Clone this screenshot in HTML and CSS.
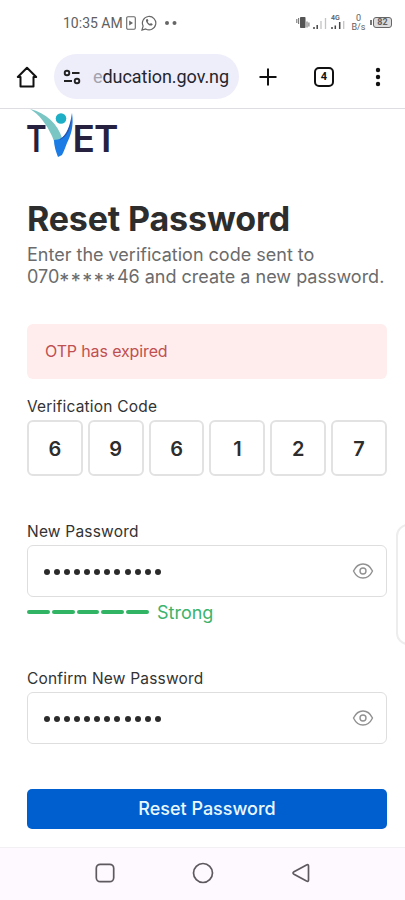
FILE: index.html
```html
<!DOCTYPE html>
<html lang="en">
<head>
<meta charset="utf-8">
<meta name="viewport" content="width=device-width, initial-scale=1">
<title>Reset Password</title>
<link rel="stylesheet" href="styles.css">
</head>
<body>
<div class="phone">
  <header class="status">
    <div class="status-left">
      <span class="clock">10:35 AM</span>
      <svg class="status-doc" width="10" height="14" viewBox="0 0 10 14"><rect x=".7" y=".7" width="8.6" height="12.6" rx="1.2" fill="none" stroke="#666" stroke-width="1.1"/><path d="M3.2 4.6v4.8L7 7z" fill="#666"/></svg>
      <svg class="status-chat" width="16" height="16" viewBox="0 0 16 16"><path d="M1 15l1.1-3.9A6.7 6.7 0 1 1 4.7 13.9z" fill="none" stroke="#666" stroke-width="1.2"/><path d="M5.4 4.2c-1.8 2 2.5 7.400 5.400 6.200 1-.5.9-1.300.7-1.500L9.900 8l-.9.9C8 8.600 7 7.500 6.700 6.700l.7-.9-.8-1.700z" fill="#666"/></svg>
      <svg class="status-dots" width="14" height="6" viewBox="0 0 14 6"><circle cx="3" cy="3" r="2" fill="#666"/><circle cx="10.500" cy="3" r="2" fill="#666"/></svg>
    </div>
    <div class="status-right">
      <svg width="14" height="14" viewBox="0 0 14 14"><rect x="4" y="1" width="5.500" height="11" rx=".8" fill="#555"/><path d="M.8 3v4M2.600 2v6M11 5.500v6M12.900 6.500v4" stroke="#777" stroke-width="1.100"/></svg>
      <svg class="signal-one" width="14" height="14" viewBox="0 0 14 14"><path d="M1 11v2M4.200 9v4" stroke="#444" stroke-width="1.500"/><path d="M8 5v8M12.500 2v11" stroke="#c4c4c4" stroke-width="1.300"/></svg>
      <span class="network"><span class="network-type">4G</span><svg width="14" height="9" viewBox="0 0 14 9"><path d="M1 6v2M4.300 4.500V8M8.700 1v7" stroke="#444" stroke-width="1.500"/><path d="M12.700 0v8" stroke="#c4c4c4" stroke-width="1.300"/></svg></span>
      <span class="speed"><span>0</span><span>B/s</span></span>
      <span class="battery"><span class="battery-cell">82</span></span>
    </div>
  </header>

  <nav class="toolbar">
    <svg class="home" width="22" height="22" viewBox="0 0 22 22"><path d="M4.500 11H1.800L11 1.700 20.200 11h-2.700v9.400h-13z" fill="none" stroke="#111" stroke-width="2" stroke-linejoin="round"/></svg>
    <div class="address">
      <svg width="18" height="16" viewBox="0 0 18 16"><g fill="none" stroke="#222" stroke-width="1.900"><circle cx="4" cy="4" r="2.300"/><path d="M9 4h7.500M1 12h8"/><circle cx="14" cy="12" r="2.300"/></g></svg>
      <span class="url"><span class="url-fade">e</span>ducation.gov.ng</span>
    </div>
    <svg class="plus" width="18" height="18" viewBox="0 0 18 18"><path d="M9 .5v17M.5 9h17" stroke="#111" stroke-width="2"/></svg>
    <span class="tabs">4</span>
    <svg class="menu" width="6" height="20" viewBox="0 0 6 20"><g fill="#111"><circle cx="3" cy="3" r="2.200"/><circle cx="3" cy="10" r="2.200"/><circle cx="3" cy="17" r="2.200"/></g></svg>
  </nav>

  <main class="page">
    <svg class="logo" width="96" height="60" viewBox="0 0 96 60" role="img" aria-label="TVET">
      <g class="logo-text"><text x="-1" y="43" textLength="20" lengthAdjust="spacingAndGlyphs">T</text><text x="45.500" y="43">ET</text></g>
      <path d="M3 0C19 4 31 15 35 29l-4 18C29 40 28 34 25 27 20 16 12 5 3 0z" fill="#79c6c5"/>
      <path d="M45 4c2 13-1 22-5 30-2 5-3 8-5 12l-4 2c-2-5-4-11-4-17 11 0 17-11 18-27z" fill="#1b7ce6"/>
      <path d="M45 4C43 17 40 26 32 31c8-2 13-12 13-27z" fill="#2a55b0"/>
      <circle cx="34" cy="9.500" r="5.300" fill="#1eafc6"/>
    </svg>
    <h1 class="title">Reset Password</h1>
    <p class="intro">Enter the verification code sent to<br>070<span class="stars">*****</span>46 and create a new password.</p>
    <div class="alert">OTP has expired</div>

    <div class="label">Verification Code</div>
    <div class="code">
      <span>6</span><span>9</span><span>6</span><span>1</span><span>2</span><span>7</span>
    </div>

    <div class="label label-new">New Password</div>
    <div class="field">
      <div class="mask"><i></i><i></i><i></i><i></i><i></i><i></i><i></i><i></i><i></i><i></i><i></i><i></i></div>
      <svg width="22" height="18" viewBox="0 0 22 18"><g fill="none" stroke="#919191" stroke-width="1.400"><path d="M1.500 9C6 -.4 16 -.4 20.500 9 16 18.400 6 18.400 1.500 9z"/><circle cx="11" cy="9" r="3"/></g></svg>
    </div>
    <div class="strength">
      <div class="bars"><i></i><i></i><i></i><i></i><i></i></div>
      <span>Strong</span>
    </div>

    <div class="label label-confirm">Confirm New Password</div>
    <div class="field">
      <div class="mask"><i></i><i></i><i></i><i></i><i></i><i></i><i></i><i></i><i></i><i></i><i></i><i></i></div>
      <svg width="22" height="18" viewBox="0 0 22 18"><g fill="none" stroke="#919191" stroke-width="1.400"><path d="M1.500 9C6 -.4 16 -.4 20.500 9 16 18.400 6 18.400 1.500 9z"/><circle cx="11" cy="9" r="3"/></g></svg>
    </div>
    <button class="submit">Reset Password</button>
  </main>

  <footer class="system">
    <svg width="20" height="20" viewBox="0 0 20 20"><rect x="1.300" y="1.300" width="17.400" height="17.400" rx="4" fill="none" stroke="#5d595f" stroke-width="1.700"/></svg>
    <svg width="22" height="22" viewBox="0 0 22 22"><circle cx="11" cy="11" r="9.500" fill="none" stroke="#5d595f" stroke-width="1.700"/></svg>
    <svg width="20" height="20" viewBox="0 0 20 20"><path d="M17.500 3v14q0 2-2 1L3 11.300q-2-1.300 0-2.600L15.500 2q2-1 2 1z" fill="none" stroke="#5d595f" stroke-width="1.700"/></svg>
  </footer>
  <div class="edge-handle"></div>
</div>
</body>
</html>
```
FILE: styles.css
```css
* { box-sizing: border-box; }
body { margin: 0; background: #fff; font-family: Inter, sans-serif; color: #2d2d2d; }
svg { display: block; flex: none; }
.phone { position: relative; width: 405px; height: 900px; overflow: hidden; display: flex; flex-direction: column; }

.status { height: 46px; flex: none; display: flex; justify-content: space-between; padding: 0 13px 0 63px; font-family: Roboto, sans-serif; color: #606060; }
.status-left, .status-right { display: flex; align-items: center; height: 45px; }
.clock { font-size: 14px; width: 59px; letter-spacing: 0; white-space: nowrap; }
.status-doc { margin-left: 4px; }
.status-chat { margin-left: 5px; }
.status-dots { margin-left: 7px; }
.signal-one { margin-left: 3px; }
.network { display: flex; flex-direction: column; margin-left: 4px; width: 14px; }
.network-type { font-size: 7px; line-height: 6px; font-weight: 600; }
.speed { display: flex; flex-direction: column; align-items: center; width: 15px; margin-left: 6px; font-size: 9px; line-height: 9px; }
.battery { display: flex; align-items: center; margin-left: 4px; }
.battery::before { content: ""; width: 2px; height: 5px; background: #777; margin-right: 1px; }
.battery-cell { width: 19px; height: 11px; border: 1px solid #666; border-radius: 3px; background: #ddd; font-size: 9px; line-height: 9px; font-weight: 700; text-align: center; }

.toolbar { height: 63px; flex: none; border-bottom: 1px solid #dedee2; display: flex; align-items: center; padding: 0 0 0 16px; }
.home { margin-top: -1px; }
.address { width: 185px; height: 45px; margin: -1px 0 0 16px; border-radius: 23px; background: #eeedfa; display: flex; align-items: center; padding-left: 9px; }
.url { font-family: Roboto, sans-serif; font-size: 18px; color: #25252c; margin-left: 12px; white-space: nowrap; letter-spacing: -.05px; }
.url-fade { color: #a3a3ae; }
.plus { margin-left: 20px; margin-top: -1px; }
.tabs { width: 20px; height: 20px; margin: -1px 0 0 37px; border: 2px solid #111; border-radius: 5px; font: 700 11px/16px Roboto, sans-serif; color: #111; text-align: center; }
.menu { margin-left: 41px; margin-top: -1px; }

.page { flex: 1; padding: 0 18px 0 27px; }
.logo { margin-bottom: -12px; overflow: visible; }
.logo-text { font-family: Inter, sans-serif; font-weight: 600; font-size: 37px; letter-spacing: -.8px; fill: #25213f; }
.title { margin: 39px 0 0; font-size: 34px; line-height: 46px; font-weight: 700; letter-spacing: -.15px; white-space: nowrap; }
.intro { margin: 2px 0 0; font-size: 18px; line-height: 22px; color: #6b6b6b; white-space: nowrap; }
.stars { display: inline-block; height: 22px; padding-top: 4px; vertical-align: top; font-size: 20px; letter-spacing: 1.500px; }
.alert { height: 55px; margin-top: 36px; border-radius: 6px; background: #ffeded; color: #c05050; font-size: 16px; line-height: 54px; letter-spacing: -.13px; padding-left: 18px; }
.label { margin-top: 18px; font-size: 15.500px; line-height: 20px; height: 23px; color: #333; letter-spacing: .2px; white-space: nowrap; }
.code { display: grid; grid-template-columns: repeat(6, 1fr); gap: 5px; }
.code span { height: 56px; border: 2px solid #e2e2e2; border-radius: 6px; font-size: 20px; line-height: 54px; font-weight: 600; text-align: center; }
.label-new { margin-top: 46px; }
.field { height: 52px; border: 1px solid #dedede; border-radius: 6px; display: flex; align-items: center; justify-content: space-between; padding: 0 12px 0 15.500px; }
.mask { display: flex; gap: 4.150px; padding-top: 2px; }
.mask i { width: 6px; height: 6px; border-radius: 50%; background: #2b2b2b; }
.strength { display: flex; align-items: center; height: 30px; font-size: 18px; color: #3bb36c; }
.bars { display: flex; gap: 2px; width: 122px; margin-right: 8px; }
.bars i { flex: 1; height: 4px; border-radius: 2px; background: #31b565; }
.label-confirm { margin-top: 42px; }
.submit { display: block; width: 100%; height: 40px; margin-top: 45px; padding: 0; border: 0; border-radius: 5px; background: #005fce; color: #e9f8ff; font: 500 18px/40px Inter, sans-serif; }

.system { height: 53px; flex: none; border-top: 1px solid #f3f0f4; background: #fdf9fe; display: flex; justify-content: center; align-items: center; gap: 77px; padding-bottom: 2px; }
.edge-handle { position: absolute; left: 396px; top: 524px; width: 24px; height: 121px; border: 2px solid #ededed; border-radius: 14px; background: #fff; }
```
